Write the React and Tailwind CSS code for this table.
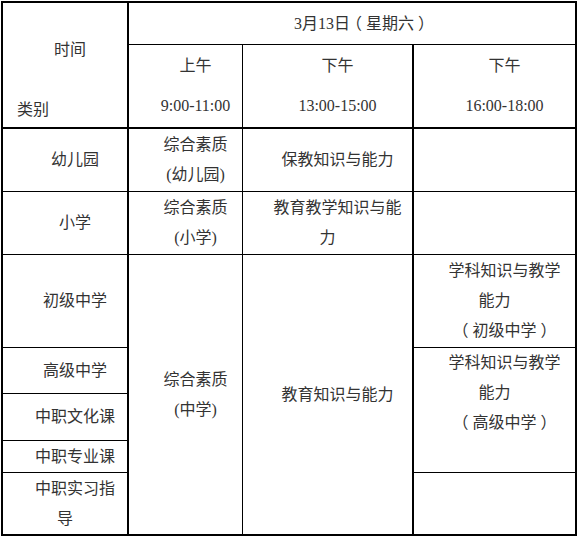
import React from "react"

const FONT = "font-['Liberation_Serif','Noto_Sans_CJK_SC',sans-serif]"

function Cell({ className = "", top = false, children }) {
  return (
    <div
      className={`flex flex-col ${top ? "justify-start" : "justify-center"} px-[7px] text-center border-black ${className}`}
    >
      {children}
    </div>
  )
}

function P({ children, className = "" }) {
  return <p className={`indent-[20px] leading-[30px] ${className}`}>{children}</p>
}

// full-width brackets centred in their em box, as the source font draws them
const Br = ({ c }) => (
  <span className="inline-block w-[16px] indent-0 text-center [font-feature-settings:'halt']">{c}</span>
)

export default function App() {
  return (
    <div className={`min-h-screen bg-white p-px text-[16px] text-[#333] ${FONT}`}>
      <div className="grid w-fit grid-cols-[126px_114px_171px_163px] grid-rows-[42px_84px_63px_63px_93px_46px_47px_32px_63px] border-l-2 border-t-2 border-black">
        {/* header: category / time */}
        <div className="row-span-2 border-r-2 border-b-2 border-black pt-[32px] text-left">
          <div className="pl-[51px] leading-[30px]">时间</div>
          <div className="mt-[30px] pl-[14px] leading-[30px]">类别</div>
        </div>
        <Cell className="col-span-3 border-r-2 border-b">
          <P>
            3月13日<Br c="（" />星期六<Br c="）" />
          </P>
        </Cell>

        <Cell className="border-r border-b-2">
          <p className="indent-[20px] leading-[40px]">上午</p>
          <p className="indent-[20px] leading-[40px]">9:00-11:00</p>
        </Cell>
        <Cell className="border-r-2 border-b-2">
          <p className="indent-[20px] leading-[40px]">下午</p>
          <p className="indent-[20px] leading-[40px]">13:00-15:00</p>
        </Cell>
        <Cell className="border-r-2 border-b-2">
          <p className="indent-[20px] leading-[40px]">下午</p>
          <p className="indent-[20px] leading-[40px]">16:00-18:00</p>
        </Cell>

        {/* 幼儿园 */}
        <Cell className="border-r-2 border-b">
          <P>幼儿园</P>
        </Cell>
        <Cell className="border-r border-b">
          <P>综合素质</P>
          <P>(幼儿园)</P>
        </Cell>
        <Cell className="border-r-2 border-b">
          <P>保教知识与能力</P>
        </Cell>
        <Cell className="border-r-2 border-b" />

        {/* 小学 */}
        <Cell className="border-r-2 border-b">
          <P>小学</P>
        </Cell>
        <Cell className="border-r border-b">
          <P>综合素质</P>
          <P>(小学)</P>
        </Cell>
        <Cell className="border-r-2 border-b">
          <P>教育教学知识与能力</P>
        </Cell>
        <Cell className="border-r-2 border-b" />

        {/* 初级中学 */}
        <Cell className="border-r-2 border-b">
          <P>初级中学</P>
        </Cell>
        <Cell className="row-span-5 border-r border-b-2">
          <P>综合素质</P>
          <P>(中学)</P>
        </Cell>
        <Cell className="row-span-5 border-r-2 border-b-2">
          <P>教育知识与能力</P>
        </Cell>
        <Cell top className="border-r-2 border-b pt-px">
          <P>学科知识与教学能力</P>
          <P>
            <Br c="（" />初级中学<Br c="）" />
          </P>
        </Cell>

        {/* 高级中学 */}
        <Cell className="border-r-2 border-b">
          <P>高级中学</P>
        </Cell>
        <Cell top className="row-span-3 border-r-2 border-b">
          <P>学科知识与教学能力</P>
          <P>
            <Br c="（" />高级中学<Br c="）" />
          </P>
        </Cell>

        <Cell className="border-r-2 border-b">
          <P>中职文化课</P>
        </Cell>
        <Cell className="border-r-2 border-b">
          <P>中职专业课</P>
        </Cell>

        <Cell className="border-r-2 border-b-2">
          <P>中职实习指导</P>
        </Cell>
        <Cell className="border-r-2 border-b-2" />
      </div>
    </div>
  )
}
